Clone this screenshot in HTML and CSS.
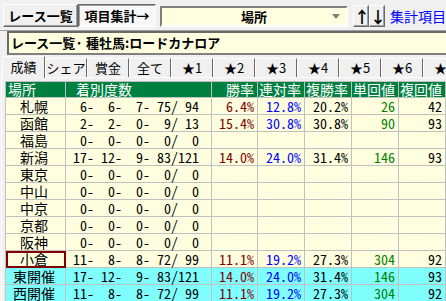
FILE: index.html
```html
<!DOCTYPE html>
<html lang="ja">
  <head>
    <meta charset="UTF-8" />
    <title>レース一覧 項目集計</title>
    <link rel="stylesheet" href="styles.css">
  </head>
  <body>
    <div class="toolbar">
      <button class="btn btn-list">レース一覧</button>
      <button class="btn btn-sum pressed">項目集計→</button>
      <div class="combo">
        <span class="combo-text">場所</span>
        <span class="combo-arrow"></span>
      </div>
      <div class="sort">
        <button class="btn btn-arrow">↑</button>
        <button class="btn btn-arrow">↓</button>
      </div>
      <a href="#" class="menu-link">集計項目メニュー</a>
    </div>

    <div class="title">レース一覧· 種牡馬:ロードカナロア</div>

    <div class="tabs">
      <div class="tab active">成績</div>
      <div class="tab">シェア</div>
      <div class="tab">賞金</div>
      <div class="tab">全て</div>
      <div class="tab">★1</div>
      <div class="tab">★2</div>
      <div class="tab">★3</div>
      <div class="tab">★4</div>
      <div class="tab">★5</div>
      <div class="tab">★6</div>
      <div class="tab">★7</div>
    </div>

    <div class="panel">
      <table class="grid">
        <colgroup>
          <col class="c-place"><col class="c-count">
          <col class="c-rate"><col class="c-rate2"><col class="c-rate2">
          <col class="c-rate2"><col class="c-rate2"><col class="c-rest">
        </colgroup>
        <thead>
          <tr>
            <th class="h-place">場所</th>
            <th class="h-count">着別度数</th>
            <th>勝率</th>
            <th>連対率</th>
            <th>複勝率</th>
            <th>単回値</th>
            <th>複回値</th>
            <th></th>
          </tr>
        </thead>
        <tbody>
          <tr>
            <td class="place">札幌</td><td class="num">  6-  6-  7- 75/ 94</td>
            <td class="num win">6.4%</td><td class="num ren">12.8%</td><td class="num">20.2%</td>
            <td class="num tan">26</td><td class="num">42</td><td></td>
          </tr>
          <tr>
            <td class="place">函館</td><td class="num">  2-  2-  0-  9/ 13</td>
            <td class="num win">15.4%</td><td class="num ren">30.8%</td><td class="num">30.8%</td>
            <td class="num tan">90</td><td class="num">93</td><td></td>
          </tr>
          <tr>
            <td class="place">福島</td><td class="num">  0-  0-  0-  0/  0</td>
            <td></td><td></td><td></td><td></td><td></td><td></td>
          </tr>
          <tr>
            <td class="place">新潟</td><td class="num"> 17- 12-  9- 83/121</td>
            <td class="num win">14.0%</td><td class="num ren">24.0%</td><td class="num">31.4%</td>
            <td class="num tan">146</td><td class="num">93</td><td></td>
          </tr>
          <tr>
            <td class="place">東京</td><td class="num">  0-  0-  0-  0/  0</td>
            <td></td><td></td><td></td><td></td><td></td><td></td>
          </tr>
          <tr>
            <td class="place">中山</td><td class="num">  0-  0-  0-  0/  0</td>
            <td></td><td></td><td></td><td></td><td></td><td></td>
          </tr>
          <tr>
            <td class="place">中京</td><td class="num">  0-  0-  0-  0/  0</td>
            <td></td><td></td><td></td><td></td><td></td><td></td>
          </tr>
          <tr>
            <td class="place">京都</td><td class="num">  0-  0-  0-  0/  0</td>
            <td></td><td></td><td></td><td></td><td></td><td></td>
          </tr>
          <tr>
            <td class="place">阪神</td><td class="num">  0-  0-  0-  0/  0</td>
            <td></td><td></td><td></td><td></td><td></td><td></td>
          </tr>
          <tr>
            <td class="place selected">小倉</td><td class="num"> 11-  8-  8- 72/ 99</td>
            <td class="num win">11.1%</td><td class="num ren">19.2%</td><td class="num">27.3%</td>
            <td class="num tan">304</td><td class="num">92</td><td></td>
          </tr>
          <tr class="total">
            <td class="place">東開催</td><td class="num"> 17- 12-  9- 83/121</td>
            <td class="num win">14.0%</td><td class="num ren">24.0%</td><td class="num">31.4%</td>
            <td class="num tan">146</td><td class="num">93</td><td></td>
          </tr>
          <tr class="total">
            <td class="place">西開催</td><td class="num"> 11-  8-  8- 72/ 99</td>
            <td class="num win">11.1%</td><td class="num ren">19.2%</td><td class="num">27.3%</td>
            <td class="num tan">304</td><td class="num">92</td><td></td>
          </tr>
        </tbody>
      </table>
    </div>
  </body>
</html>
```

FILE: styles.css
```css
body {
  margin: 0;
  width: 446px;
  height: 301px;
  overflow: hidden;
  background-color: #f0f0f0;
  font-family: "Noto Sans CJK JP", sans-serif;
  font-size: 14px;
  color: #000;
}

/* top toolbar */
.toolbar {
  display: flex;
  align-items: flex-start;
  height: 31px;
  padding: 4px 0 0 3px;
  box-sizing: border-box;
  white-space: nowrap;
  border-bottom: 1px solid #a0a0a0;
}

.toolbar > * {
  flex: none;
}

.btn {
  height: 23px;
  padding: 0;
  box-sizing: border-box;
  font-family: "Noto Sans CJK JP", sans-serif;
  font-size: 13px;
  font-weight: bold;
  line-height: 20px;
  color: #000;
  background-color: #f0f0f0;
  border: 1px solid;
  border-color: #fff #696969 #696969 #fff;
  box-shadow: inset -1px -1px 0 #a0a0a0;
}

.btn-list {
  width: 75px;
}

.btn-sum {
  width: 78px;
}

.btn.pressed {
  border-color: #696969 #fff #fff #696969;
  box-shadow: inset 1px 1px 0 #a0a0a0;
  background-color: #f8f8f8;
}

.combo {
  display: flex;
  align-items: center;
  width: 188px;
  height: 21px;
  margin: 2px 0 0 4px;
  box-sizing: border-box;
  background-color: #ffffe0;
  border: 2px solid;
  border-color: #808080 #fff #fff #808080;
}

.combo-text {
  flex: 1;
  padding-left: 14px;
  text-align: center;
  font-size: 13px;
  font-weight: bold;
  line-height: 17px;
}

.combo-arrow {
  width: 0;
  height: 0;
  margin-right: 6px;
  border-left: 4px solid transparent;
  border-right: 4px solid transparent;
  border-top: 5px solid #808080;
}

.sort {
  display: flex;
  margin: 1px 0 0 5px;
}

.btn-arrow {
  width: 16px;
  height: 22px;
  font-size: 16px;
  line-height: 18px;
}

.menu-link {
  margin-left: 5px;
  line-height: 24px;
  color: #0000ff;
  text-decoration: none;
}

/* caption */
.title {
  height: 24px;
  margin-left: 7px;
  padding-left: 2px;
  box-sizing: border-box;
  background-color: #ffffe0;
  border-top: 2px solid #696969;
  border-left: 2px solid #696969;
  border-bottom: 2px solid #808080;
  font-size: 13px;
  font-weight: bold;
  line-height: 20px;
  white-space: nowrap;
}

/* tab strip */
.tabs {
  display: flex;
  align-items: flex-end;
  height: 23px;
  padding-left: 2px;
  box-sizing: border-box;
  border-bottom: 1px solid #fff;
  white-space: nowrap;
}

.tab {
  flex: none;
  width: 42px;
  height: 19px;
  box-sizing: border-box;
  border: 1px solid;
  border-color: #fff #696969 transparent #fff;
  border-bottom: none;
  text-align: center;
  font-size: 13px;
  line-height: 17px;
}

.tab.active {
  width: 43px;
  height: 22px;
  margin-bottom: -1px;
  background-color: #f0f0f0;
  line-height: 19px;
}

/* grid panel */
.panel {
  margin-left: 1px;
  padding: 3px 0 0 3px;
  border-left: 1px solid #fff;
}

.grid {
  border-collapse: collapse;
  table-layout: fixed;
  width: 500px;
}

.c-place { width: 60px; }
.c-count { width: 146px; }
.c-rate { width: 46px; }
.c-rate2 { width: 47px; }
.c-rest { width: 60px; }

.grid th,
.grid td {
  height: 16px;
  padding: 0 3px 0 0;
  border: 1px solid #c0c0c0;
  line-height: 16px;
  white-space: pre;
}

.grid th {
  height: 15px;
  line-height: 15px;
  background-color: #008040;
  color: #fff;
  font-weight: normal;
  text-align: right;
}

.grid th.h-place {
  text-align: left;
  padding-left: 2px;
}

.grid th.h-count {
  text-align: left;
  padding-left: 10px;
}

.grid td {
  background-color: #ffffe0;
}

.grid tr.total td {
  background-color: #80ffff;
}

.place {
  text-align: center;
}

.place.selected {
  outline: 2px solid #800000;
  outline-offset: -2px;
}

.num {
  font-family: "Noto Sans Mono CJK JP", "Liberation Mono", monospace;
  text-align: right;
}

td.num:nth-child(2) {
  padding-right: 12px;
}

.win { color: #800000; }
.ren { color: #0000ff; }
.tan { color: #008000; }
```
